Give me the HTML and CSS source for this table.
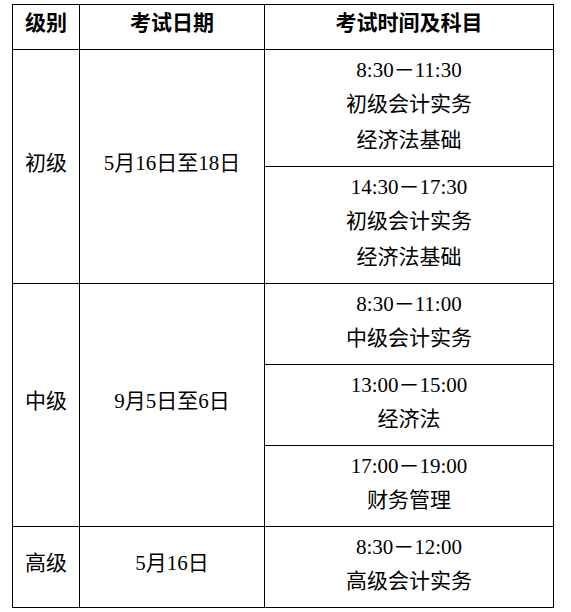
FILE: index.html
```html
<!DOCTYPE html>
<html lang="zh-CN">
<head>
<meta charset="utf-8">
<title>考试时间安排</title>
<link rel="stylesheet" href="styles.css">
</head>
<body>
<table class="schedule">
  <colgroup>
    <col class="c-level">
    <col class="c-date">
    <col class="c-time">
  </colgroup>
  <thead>
    <tr><th><div class="ln">级别</div></th><th><div class="ln">考试日期</div></th><th><div class="ln">考试时间及科目</div></th></tr>
  </thead>
  <tbody>
    <tr>
      <td rowspan="2">初级</td>
      <td rowspan="2">5月16日至18日</td>
      <td><div class="ln">8:30<span class="dash">－</span>11:30</div><div class="ln">初级会计实务</div><div class="ln">经济法基础</div></td>
    </tr>
    <tr>
      <td><div class="ln">14:30<span class="dash">－</span>17:30</div><div class="ln">初级会计实务</div><div class="ln">经济法基础</div></td>
    </tr>
    <tr>
      <td rowspan="3">中级</td>
      <td rowspan="3">9月5日至6日</td>
      <td><div class="ln">8:30<span class="dash">－</span>11:00</div><div class="ln">中级会计实务</div></td>
    </tr>
    <tr>
      <td><div class="ln">13:00<span class="dash">－</span>15:00</div><div class="ln">经济法</div></td>
    </tr>
    <tr>
      <td><div class="ln">17:00<span class="dash">－</span>19:00</div><div class="ln">财务管理</div></td>
    </tr>
    <tr>
      <td>高级</td>
      <td>5月16日</td>
      <td><div class="ln">8:30<span class="dash">－</span>12:00</div><div class="ln">高级会计实务</div></td>
    </tr>
  </tbody>
</table>
</body>
</html>
```
FILE: styles.css
```css
html, body {
  margin: 0;
  padding: 0;
  background: #fff;
}
body {
  font-family: "Liberation Serif", "Noto Sans CJK SC", serif;
  font-size: 21px;
  color: #000;
}
.schedule {
  border-collapse: collapse;
  table-layout: fixed;
  width: 541px;
  margin: 4px 0 0 12px;
}
.c-level { width: 67px; }
.c-date { width: 185px; }
.c-time { width: 289px; }
.schedule th,
.schedule td {
  border: 1px solid #000;
  padding: 0 0 8px;
  line-height: 36px;
  text-align: center;
  vertical-align: middle;
}
.schedule th {
  font-weight: 700;
}
.ln {
  height: 36px;
  line-height: 36px;
  white-space: nowrap;
}
.dash {
  font-family: "Noto Sans CJK SC", sans-serif;
}
```
